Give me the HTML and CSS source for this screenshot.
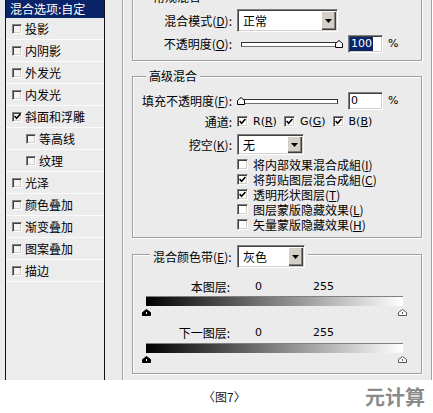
FILE: index.html
```html
<!DOCTYPE html>
<html>
<head>
<meta charset="utf-8">
<link rel="stylesheet" href="styles.css">
</head>
<body>
<div class="dialog">
  <div class="styles-list">
    <div class="list-head">混合选项:自定</div>
    <div class="item"><span class="cb sm"></span>投影</div>
    <div class="item"><span class="cb sm"></span>内阴影</div>
    <div class="item"><span class="cb sm"></span>外发光</div>
    <div class="item"><span class="cb sm"></span>内发光</div>
    <div class="item"><span class="cb sm"><svg width="7" height="7" viewBox="0 0 7 7"><polyline points="0.6,3 2.6,5.2 6.4,1" fill="none" stroke="#000" stroke-width="1.6"/></svg></span>斜面和浮雕</div>
    <div class="item sub"><span class="cb sm"></span>等高线</div>
    <div class="item sub"><span class="cb sm"></span>纹理</div>
    <div class="item"><span class="cb sm"></span>光泽</div>
    <div class="item"><span class="cb sm"></span>颜色叠加</div>
    <div class="item"><span class="cb sm"></span>渐变叠加</div>
    <div class="item"><span class="cb sm"></span>图案叠加</div>
    <div class="item"><span class="cb sm"></span>描边</div>
  </div>

  <div class="panel">
    <fieldset class="group g1">
      <legend>常规混合</legend>
      <div class="row r-mode">
        <span class="label">混合模式(<u>D</u>):</span>
        <div class="combo w-mode"><span class="val">正常</span><span class="btn"><svg width="7" height="4" viewBox="0 0 7 4"><polygon points="0,0 7,0 3.5,4" fill="#000"/></svg></span></div>
      </div>
      <div class="row r-op">
        <span class="label">不透明度(<u>O</u>):</span>
        <div class="slider"><div class="track"></div><svg class="thumb right" width="8" height="8" viewBox="0 0 8 8"><polygon points="0.5,7.5 0.5,3.5 4,0.5 7.5,3.5 7.5,7.5" fill="#fff" stroke="#000"/></svg></div>
        <div class="field"><span class="sel">100</span></div>
        <span class="pct">%</span>
      </div>
    </fieldset>

    <fieldset class="group g2">
      <legend>高级混合</legend>
      <div class="row r-fill">
        <span class="label">填充不透明度(<u>F</u>):</span>
        <div class="slider"><div class="track"></div><svg class="thumb left" width="8" height="8" viewBox="0 0 8 8"><polygon points="0.5,7.5 0.5,3.5 4,0.5 7.5,3.5 7.5,7.5" fill="#fff" stroke="#000"/></svg></div>
        <div class="field"><span class="num">0</span></div>
        <span class="pct">%</span>
      </div>
      <div class="row r-chan">
        <span class="label">通道:</span>
        <span class="cb"><svg width="7" height="7" viewBox="0 0 7 7"><polyline points="0.6,3 2.6,5.2 6.4,1" fill="none" stroke="#000" stroke-width="1.6"/></svg></span><span class="chl">R(<u>R</u>)</span>
        <span class="cb"><svg width="7" height="7" viewBox="0 0 7 7"><polyline points="0.6,3 2.6,5.2 6.4,1" fill="none" stroke="#000" stroke-width="1.6"/></svg></span><span class="chl">G(<u>G</u>)</span>
        <span class="cb"><svg width="7" height="7" viewBox="0 0 7 7"><polyline points="0.6,3 2.6,5.2 6.4,1" fill="none" stroke="#000" stroke-width="1.6"/></svg></span><span class="chl">B(<u>B</u>)</span>
      </div>
      <div class="row r-knock">
        <span class="label">挖空(<u>K</u>):</span>
        <div class="combo w-knock"><span class="val">无</span><span class="btn"><svg width="7" height="4" viewBox="0 0 7 4"><polygon points="0,0 7,0 3.5,4" fill="#000"/></svg></span></div>
      </div>
      <div class="checks">
        <div class="chk"><span class="cb"></span>将内部效果混合成組(<u>I</u>)</div>
        <div class="chk"><span class="cb"><svg width="7" height="7" viewBox="0 0 7 7"><polyline points="0.6,3 2.6,5.2 6.4,1" fill="none" stroke="#000" stroke-width="1.6"/></svg></span>将剪贴图层混合成組(<u>C</u>)</div>
        <div class="chk"><span class="cb"><svg width="7" height="7" viewBox="0 0 7 7"><polyline points="0.6,3 2.6,5.2 6.4,1" fill="none" stroke="#000" stroke-width="1.6"/></svg></span>透明形状图层(<u>T</u>)</div>
        <div class="chk"><span class="cb"></span>图层蒙版隐藏效果(<u>L</u>)</div>
        <div class="chk"><span class="cb"></span>矢量蒙版隐藏效果(<u>H</u>)</div>
      </div>
    </fieldset>

    <fieldset class="group g3">
      <legend>
        <span class="lg-label">混合颜色带(<u>E</u>):</span>
        <span class="combo w-color"><span class="val">灰色</span><span class="btn"><svg width="7" height="4" viewBox="0 0 7 4"><polygon points="0,0 7,0 3.5,4" fill="#000"/></svg></span></span>
      </legend>
      <div class="layer-row first"><span class="ll">本图层:</span><span class="lo">0</span><span class="hi">255</span></div>
      <div class="grad"></div>
      <div class="tris">
        <svg width="9" height="7" viewBox="0 0 9 7"><polygon points="0.5,6.5 0.5,3.5 4.5,0.5 8.5,3.5 8.5,6.5" fill="#000" stroke="#000"/><rect x="4" y="3" width="1" height="2" fill="#fff"/></svg>
        <svg width="9" height="7" viewBox="0 0 9 7"><polygon points="0.5,6.5 0.5,3.5 4.5,0.5 8.5,3.5 8.5,6.5" fill="#fff" stroke="#555"/><rect x="4" y="3" width="1" height="2" fill="#555"/></svg>
      </div>
      <div class="layer-row second"><span class="ll">下一图层:</span><span class="lo">0</span><span class="hi">255</span></div>
      <div class="grad g-b"></div>
      <div class="tris">
        <svg width="9" height="7" viewBox="0 0 9 7"><polygon points="0.5,6.5 0.5,3.5 4.5,0.5 8.5,3.5 8.5,6.5" fill="#000" stroke="#000"/><rect x="4" y="3" width="1" height="2" fill="#fff"/></svg>
        <svg width="9" height="7" viewBox="0 0 9 7"><polygon points="0.5,6.5 0.5,3.5 4.5,0.5 8.5,3.5 8.5,6.5" fill="#fff" stroke="#555"/><rect x="4" y="3" width="1" height="2" fill="#555"/></svg>
      </div>
    </fieldset>
  </div>
</div>
<div class="footer">
  <span class="caption">〈图7〉</span>
  <span class="mark">元计算</span>
</div>
</body>
</html>
```

FILE: styles.css
```css
* { box-sizing: border-box; }
html, body { margin: 0; padding: 0; }
body {
  width: 433px;
  height: 413px;
  overflow: hidden;
  background: #fff;
  font-family: "Noto Sans CJK SC", sans-serif;
  font-size: 12px;
  line-height: 14px;
  color: #000;
}
u { text-decoration: underline; text-underline-offset: 1px; }

.dialog {
  display: flex;
  height: 380px;
  background: #ebebeb;
  padding-left: 5px;
  overflow: hidden;
}

/* left styles list */
.styles-list {
  width: 100px;
  height: 100%;
  flex: none;
  border-left: 1px solid #111;
  border-right: 1px solid #111;
  background: #ececec;
}
.list-head {
  height: 18px;
  line-height: 17px;
  background: #0a246a;
  color: #fff;
  padding-left: 4px;
}
.item {
  height: 22px;
  display: flex;
  align-items: center;
  padding-left: 6px;
  border-bottom: 1px solid #fbfbfb;
}
.item.sub { padding-left: 20px; }
.item .cb { margin-right: 3px; }

/* checkbox */
.cb {
  width: 11px;
  height: 11px;
  flex: none;
  display: inline-flex;
  align-items: center;
  justify-content: center;
  background: #fff;
  border: 1px solid;
  border-color: #808080 #fff #fff #808080;
  box-shadow: inset 1px 1px #404040, inset -1px -1px #d4d0c8;
}
.cb.sm { width: 10px; height: 10px; background: #f4f4f4; }
.cb svg { display: block; }

/* right panel */
.panel {
  margin-left: 17px;
  width: 310px;
  height: 100%;
  flex: none;
  border-left: 1px solid #a0a0a0;
  border-right: 1px solid #a0a0a0;
  box-shadow: inset 1px 0 #fff, 1px 0 #fff;
  padding: 0 9px;
}
.group {
  margin: 0;
  padding: 0;
  min-width: 0;
  border: 1px solid #a0a0a0;
  box-shadow: inset 1px 1px #fff, 1px 1px #fff;
}
.group legend {
  padding: 0 3px;
  line-height: 14px;
  background: #ebebeb;
}
.g1 { margin-top: -10px; padding-bottom: 7px; }
.g1 legend { margin-left: 17px; }
.g2 { margin-top: 8px; padding-bottom: 5px; }
.g2 legend { margin-left: 13px; }
.g3 { margin-top: 3px; padding-bottom: 10px; }
.g3 legend {
  margin-left: 17px;
  padding: 4px 3px 0 3px;
  display: flex;
  align-items: center;
}
.lg-label { width: 79px; margin-right: 5px; white-space: nowrap; }

.row { display: flex; align-items: center; }
.label {
  width: 99px;
  flex: none;
  text-align: right;
  margin-right: 5px;
  white-space: nowrap;
}
.r-mode { margin-top: 5px; height: 23px; }
.r-op { margin-top: 3px; height: 18px; }
.r-fill { margin-top: 9px; height: 18px; }
.r-chan { margin-top: 5px; height: 13px; }
.r-knock { margin-top: 6px; height: 21px; }

/* combo box */
.combo {
  display: flex;
  height: 23px;
  flex: none;
  background: #fff;
  border: 1px solid;
  border-color: #808080 #fff #fff #808080;
  box-shadow: inset 1px 1px #404040, inset -1px -1px #d4d0c8;
  padding: 1px;
}
.combo .val {
  flex: 1;
  padding-left: 4px;
  display: flex;
  align-items: center;
}
.combo .btn {
  width: 15px;
  flex: none;
  background: #d4d0c8;
  box-shadow: inset 1px 1px #fff, inset -1px -1px #404040, inset -2px -2px #808080;
  display: flex;
  align-items: center;
  justify-content: center;
}
.combo .btn svg { display: block; }
.w-mode { width: 101px; }
.w-knock { width: 67px; height: 21px; }
.w-color { width: 68px; }

/* slider */
.slider {
  position: relative;
  width: 106px;
  height: 8px;
  flex: none;
  display: flex;
  align-items: center;
}
.track {
  margin-left: 4px;
  width: 97px;
  height: 5px;
  border: 1px solid #303030;
  border-bottom-color: #707070;
  background: #fff;
}
.thumb { position: absolute; top: 0; display: block; }
.thumb.right { right: 0; }
.thumb.left { left: 0; }

/* text field */
.field {
  width: 35px;
  height: 18px;
  flex: none;
  margin-left: 5px;
  background: #fff;
  border: 1px solid;
  border-color: #808080 #fff #fff #808080;
  box-shadow: inset 1px 1px #404040, inset -1px -1px #d4d0c8;
  padding: 1px 0 0 1px;
  font-family: "DejaVu Sans", sans-serif;
  font-size: 11px;
  line-height: 14px;
}
.field .sel {
  display: inline-block;
  background: #0a246a;
  color: #fff;
  padding: 0 1px;
}
.field .num { padding-left: 1px; }
.pct {
  margin-left: 5px;
  font-family: "DejaVu Sans", sans-serif;
  font-size: 11px;
}

.chl {
  margin-left: 5px;
  margin-right: 7px;
  font-family: "DejaVu Sans", sans-serif;
  font-size: 11px;
}

.checks { margin-top: 2px; padding-left: 104px; }
.chk { height: 15px; display: flex; align-items: center; white-space: nowrap; }
.chk .cb { margin-right: 5px; }

/* blend-if */
.layer-row { display: flex; align-items: center; height: 14px; }
.layer-row.first { margin-top: 12px; }
.layer-row.second { margin-top: 10px; }
.ll { width: 97px; text-align: right; flex: none; }
.lo {
  margin-left: 25px;
  width: 58px;
  flex: none;
  font-family: "DejaVu Sans", sans-serif;
  font-size: 11px;
}
.hi { font-family: "DejaVu Sans", sans-serif; font-size: 11px; }
.grad {
  margin-left: 13px;
  margin-top: 2px;
  width: 257px;
  height: 10px;
  border-top: 1px solid #808080;
  background: linear-gradient(to right, #000, #fff);
}
.grad.g-b { margin-top: 3px; }
.tris {
  margin-left: 9px;
  margin-top: 3px;
  width: 265px;
  height: 7px;
  display: flex;
  justify-content: space-between;
}
.tris svg { display: block; }

/* footer */
.footer {
  height: 33px;
  display: flex;
  align-items: center;
}
.caption {
  margin-left: 203px;
  color: #222;
  font-size: 12px;
}
.mark {
  margin-left: auto;
  margin-right: 8px;
  font-size: 20px;
  line-height: 24px;
  font-weight: bold;
  color: #8a8a8a;
}
```
